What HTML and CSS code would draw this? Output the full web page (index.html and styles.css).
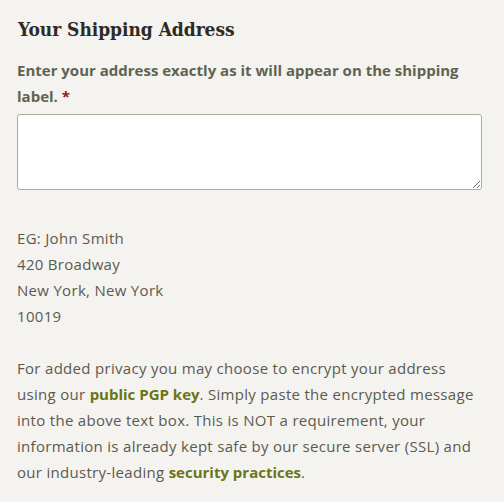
FILE: index.html
```html
<!DOCTYPE html>
<html>
<head>
<meta charset="utf-8">
<link rel="stylesheet" href="styles.css">
</head>
<body>
<div class="wrap">
  <h2 class="title">Your Shipping Address</h2>
  <label class="label" for="addr">Enter your address exactly as it will appear on the shipping label. <span class="req">*</span></label>
  <textarea id="addr" class="box"></textarea>
  <p class="example">EG: John Smith<br>420 Broadway<br>New York, New York<br>10019</p>
  <p class="note">For added privacy you may choose to encrypt your address using our <a href="#">public PGP key</a>. Simply paste the encrypted message into the above text box. This is NOT a requirement, your information is already kept safe by our secure server (SSL) and our industry-leading <a href="#">security practices</a>.</p>
</div>
</body>
</html>
```
FILE: styles.css
```css
html, body {
  margin: 0;
  padding: 0;
  background: #f5f3f0;
}
.wrap {
  padding: 14px 20px 0 17px;
  font-family: "Open Sans", sans-serif;
  color: #5b5a4f;
}
.title {
  margin: 0 0 13px 1px;
  font-family: "DejaVu Serif Condensed", "DejaVu Serif", serif;
  font-stretch: condensed;
  font-weight: bold;
  font-size: 19px;
  line-height: 30px;
  letter-spacing: -0.05px;
  color: #2e2b25;
}
.label {
  display: block;
  font-weight: bold;
  font-size: 15px;
  line-height: 26px;
  color: #606352;
}
.req {
  color: #8c1b1b;
}
.box {
  display: block;
  box-sizing: border-box;
  width: 465px;
  height: 76px;
  margin-top: 5px;
  border: 1px solid #a9ac98;
  border-radius: 3px;
  background: #ffffff;
}
.example {
  margin: 35px 0 0;
  font-size: 15px;
  line-height: 26px;
  letter-spacing: 0.3px;
}
.note {
  margin: 26px 0 0;
  font-size: 15px;
  line-height: 26px;
  letter-spacing: 0.3px;
}
.note a {
  color: #6a7518;
  font-weight: bold;
  text-decoration: none;
  letter-spacing: 0;
}
```
